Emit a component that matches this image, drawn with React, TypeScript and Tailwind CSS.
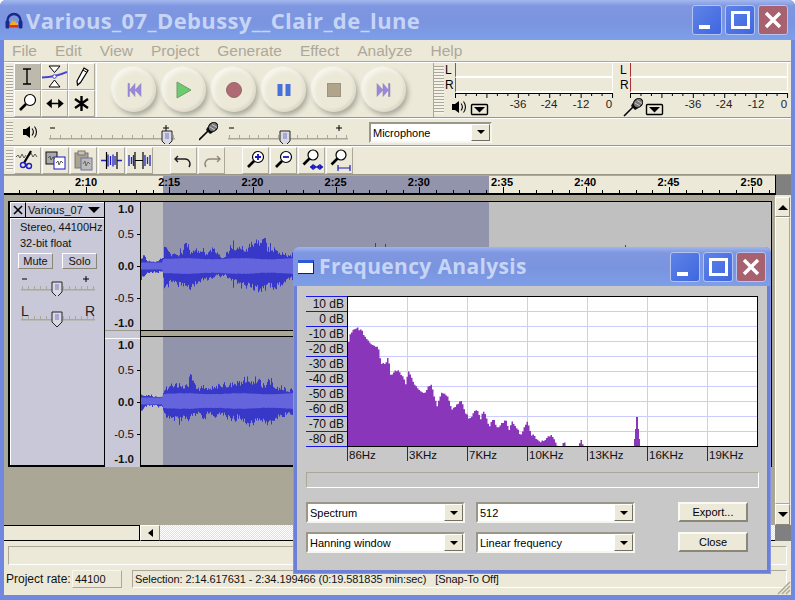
import React from "react";

function rng(seed: number) {
  let s = seed;
  return () => {
    s = (s * 1664525 + 1013904223) % 4294967296;
    return s / 4294967296;
  };
}
function interp(pts: number[][], x: number) {
  if (x <= pts[0][0]) return pts[0][1];
  for (let i = 1; i < pts.length; i++) {
    if (x <= pts[i][0]) {
      const [a, b] = pts[i - 1];
      const [c, d] = pts[i];
      return b + ((d - b) * (x - a)) / (c - a || 1);
    }
  }
  return pts[pts.length - 1][1];
}

const Z = (pts: number[][]) => pts.map(([z, a]) => [100 + z / 3, a]);
const c1t = Z([[123,10],[133,15],[140,8],[160,6],[187,8],[190,8],[193,28],[205,17],[240,17],[255,23],[270,23],[300,20],[320,13],[340,20],[370,11],[395,26],[420,20],[460,26],[495,28],[530,18],[570,13],[700,14],[2100,14]]);
const c1b = Z([[123,14],[140,7],[187,7],[193,30],[210,17],[270,27],[300,20],[340,16],[370,12],[400,21],[440,25],[495,30],[530,23],[570,14],[700,16],[2100,16]]);
const c2t = Z([[123,9],[140,7],[187,5],[193,17],[230,18],[270,27],[300,16],[330,16],[380,22],[420,22],[460,27],[500,24],[540,16],[575,14],[2100,14]]);
const c2b = Z([[123,13],[140,6],[187,6],[193,17],[270,25],[300,18],[350,20],[400,20],[440,26],[500,27],[540,16],[575,16],[2100,15]]);

function wave(t: number[][], b: number[][], seed: number) {
  const r = rng(seed);
  const mid = 64;
  let dark = "";
  let top = "";
  let bot = "";
  let slowA = 0.8;
  let slowB = 0.8;
  for (let i = 0; i < 630; i++) {
    const x = i + 141;
    if (i % 6 === 0) {
      slowA = 0.66 + r() * 0.34;
      slowB = 0.66 + r() * 0.34;
    }
    const a = interp(t, x) * Math.min(1, slowA * (0.78 + 0.34 * r()));
    const c = interp(b, x) * Math.min(1, slowB * (0.78 + 0.34 * r()));
    const spikeA = r() > 0.93 ? 1 / Math.max(slowA, 0.7) : 1;
    const spikeB = r() > 0.93 ? 1 / Math.max(slowB, 0.7) : 1;
    dark += `M${i + 0.5} ${(mid - Math.max(a * spikeA, x < 163 ? 4 : 8)).toFixed(1)}V${(mid + Math.max(c * spikeB, x < 163 ? 4 : 8)).toFixed(1)}`;
    const rm = x < 163 ? 3.6 : 7 + 0.5 * Math.sin(x / 9) + r() * 0.6;
    top += `${i === 0 ? "M" : "L"}${i} ${(mid - rm).toFixed(1)}`;
    bot = `L${i} ${(mid + rm).toFixed(1)}` + bot;
  }
  return { dark, rms: top + bot + "Z" };
}
const w1 = wave(c1t, c1b, 7);
const w2 = wave(c2t, c2b, 23);

function Channel({ w, extra }: { w: { dark: string; rms: string }; extra?: boolean }) {
  return (
    <svg width={630} height={129} className="block">
      <rect width={630} height={129} fill="#c0c0c0" />
      <rect x={22} width={326} height={129} fill="#9294ac" />
      <path d={w.dark} stroke="#3737c8" strokeWidth={1} fill="none" />
      <path d={w.rms} fill="#6464dc" />
      {extra && <path d="M234.5 41V64M244.5 42V64M484.5 43V64" stroke="#3737c8" />}
    </svg>
  );
}

const specZ: number[][] = [[172,320],[178,285],[195,262],[215,275],[225,295],[245,315],[262,322],[272,370],[285,375],[292,350],[300,405],[315,388],[330,400],[345,430],[355,392],[375,440],[400,462],[420,432],[440,500],[450,460],[470,468],[485,510],[510,482],[535,540],[558,505],[570,535],[580,512],[595,560],[608,532],[620,565],[645,540],[655,570],[665,542],[690,585],[710,545],[722,590],[730,585],[745,605],[760,600],[782,585],[800,618],[815,618],[820,600],[825,618],[865,618],[870,597],[878,618],[900,618]];
function spectrum() {
  const r = rng(11);
  let d = "M1 150";
  for (let x = 1; x < 240; x += 1.5) {
    const z = (x + 347 - 290) * 3;
    const y = 240 + interp(specZ, z) / 3 - 296;
    const j = y > 147 ? 0 : (r() - 0.5) * 2.5;
    d += `L${x.toFixed(1)} ${Math.min(150, y + j).toFixed(1)}L${(x + 1.5).toFixed(1)} ${Math.min(150, y + j).toFixed(1)}`;
  }
  d += "L241 150Z";
  return d;
}
const specPath = spectrum();

function TitleButtons({ gap = 3 }: { gap?: number }) {
  const base = "w-[30px] h-[30px] rounded-[3px] border border-[#b4c4f0] relative";
  return (
    <div className="flex" style={{ gap }}>
      <div className={base + " bg-gradient-to-br from-[#5f83e6] to-[#3f66e0]"}>
        <div className="absolute left-[6px] bottom-[5px] w-[11px] h-[4px] bg-white" />
      </div>
      <div className={base + " bg-gradient-to-br from-[#5f83e6] to-[#3f66e0]"}>
        <div className="absolute left-[5px] top-[5px] w-[19px] h-[18px] border-[3px] border-white" />
      </div>
      <div className={base + " bg-[#a8626f]"}>
        <svg width={28} height={28} className="block">
          <path d="M7 7L21 21M21 7L7 21" stroke="#fff" strokeWidth={3.4} />
        </svg>
      </div>
    </div>
  );
}

function Grip() {
  return <div className="w-[7px] ml-[2px] mr-[1px] self-stretch my-[3px] shrink-0 bg-[repeating-linear-gradient(180deg,#aca899_0_1px,#f5f3e8_1px_3px)]" />;
}

function Tool({ active, children }: { active?: boolean; children: React.ReactNode }) {
  return (
    <div className={"w-[27px] h-[27px] flex items-center justify-center border border-t-[#fff] border-l-[#fff] border-r-[#aca899] border-b-[#aca899] " + (active ? "bg-[#bdbaad] border-t-[#8d8a7d] border-l-[#8d8a7d]" : "bg-[#ece9d8]")}>
      {children}
    </div>
  );
}

const Ico = ({ children }: { children: React.ReactNode }) => (
  <svg width={25} height={25} viewBox="0 0 25 25" className="block">{children}</svg>
);
const Mag = ({ cx = 15, cy = 9, r = 5.5 }: { cx?: number; cy?: number; r?: number }) => (
  <g>
    <circle cx={cx} cy={cy} r={r} fill="#fff" stroke="#000" strokeWidth={1.2} />
    <path d={`M${cx - r + 1.5} ${cy + r - 1.5}L${cx - r - 4.5} ${cy + r + 4.5}`} stroke="#000" strokeWidth={2.6} />
  </g>
);

function Transport({ children }: { children: React.ReactNode }) {
  return (
    <div className="w-[44px] h-[44px] rounded-full bg-[#ece9d8] flex items-center justify-center shadow-[2px_3px_5px_rgba(60,60,50,0.38),-1px_-1px_2px_#fff,inset_2px_2px_4px_#f8f7ee,inset_-2px_-2px_3px_rgba(0,0,0,0.08)]">
      <svg width={24} height={24} viewBox="0 0 24 24" className="block">{children}</svg>
    </div>
  );
}

const DropBox = () => (
  <g>
    <rect x={0.5} y={0.5} width={16} height={10} rx={1} fill="#ece9d8" stroke="#000" strokeWidth={1.4} />
    <path d="M3 3h11l-5.5 5.5z" fill="#000" />
  </g>
);
const Speaker = () => (
  <g>
    <path d="M0 4h3l4-3v12l-4-3H0z" fill="#000" />
    <path d="M9 3.5c1.6 2 1.6 5 0 7M11.5 1.5c2.6 3.2 2.6 8 0 11" stroke="#000" fill="none" strokeWidth={1.1} />
  </g>
);
const Mic = () => (
  <g>
    <path d="M0 19L11 8" stroke="#000" strokeWidth={1.6} />
    <path d="M7 9l4 4 3-1.5-5.5-5.5z" fill="#111" />
    <ellipse cx={14} cy={6} rx={5} ry={4.2} transform="rotate(-45 14 6)" fill="#777" stroke="#000" />
    <path d="M11 6l5 3M13 3.5l5 3" stroke="#ddd" strokeWidth={0.8} />
  </g>
);

function Meter({ red, icon, dropX, w }: { red?: boolean; icon: React.ReactNode; dropX: number; w: number }) {
  const c = red ? "#a83030" : "#2f8a3a";
  const Row = ({ l }: { l: string }) => (
    <div className="flex h-[15px]">
      <div className="w-[11px] shrink-0 text-[12px] leading-[15px] pl-[1px] text-black">{l}</div>
      <div className="w-[158px] shrink-0 border-r-[1px] border-b-[2px] border-r-white border-b-white bg-[#ece9d8]" style={{ borderLeft: `1px solid ${c}` }} />
    </div>
  );
  const ticks: string[] = [];
  for (let i = 0; i <= 15; i++) ticks.push(`M${11.5 + i * 10.47} 1V${i % 3 === 0 ? 5 : 3}`);
  return (
    <div className="shrink-0 overflow-hidden" style={{ width: w }}>
      <Row l="L" />
      <Row l="R" />
      <svg width={175} height={26} className="block">
        <path d="M11 .5H169" stroke="#000" />
        <path d={ticks.join("")} stroke="#000" />
        <g fontSize={11.5} textAnchor="middle" fill="#222">
          <text x={74} y={15}>-36</text>
          <text x={105} y={15}>-24</text>
          <text x={137} y={15}>-12</text>
          <text x={165} y={15}>0</text>
        </g>
        <g>{icon}</g>
        <g transform={`translate(${dropX} 11)`}><DropBox /></g>
      </svg>
    </div>
  );
}

function Slider({ w, t, l, r, h = 24, y = 18 }: { w: number; t: number; l?: string; r?: string; h?: number; y?: number }) {
  const n = 12;
  const ticks: string[] = [];
  for (let i = 0; i <= n; i++) ticks.push(`M${1.5 + Math.round((i * (w - 3)) / n)} ${y - 3}V${y}`);
  return (
    <svg width={w} height={h} className="block">
      <path d={ticks.join("")} stroke="#aca899" />
      <rect x={0} y={y} width={w} height={1.5} fill="#aca899" />
      {!l && <path d={`M1 ${y - 10}h5M${w - 12} ${y - 10}h6M${w - 9} ${y - 13}v6`} stroke="#000" />}
      {l && <text x={0} y={y - 3} fontSize={14} fill="#222">{l}</text>}
      {r && <text x={w} y={y - 3} fontSize={14} textAnchor="end" fill="#222">{r}</text>}
      <path d={`M${t - 5} ${y - 7}h10v10l-5 5l-5 -5z`} fill="#d9d9e4" stroke="#222" />
      <path d={`M${t - 2} ${y - 4}h4M${t - 2} ${y - 2}h4M${t - 2} ${y}h4`} stroke="#7676c0" />
    </svg>
  );
}

function Combo({ w, text, className = "" }: { w: number; text: string; className?: string }) {
  return (
    <div className={"flex items-center h-[21px] bg-white border-2 border-t-[#9a9788] border-l-[#9a9788] border-r-[#f6f5ee] border-b-[#f6f5ee] " + className} style={{ width: w }}>
      <div className="flex-1 pl-[2px] pt-[2px] text-[11px] text-black whitespace-nowrap overflow-hidden leading-none">{text}</div>
      <div className="w-[19px] h-[17px] bg-[#ece9d8] border border-t-white border-l-white border-r-[#716f64] border-b-[#716f64] flex items-center justify-center">
        <div className="w-0 h-0 border-l-[4px] border-r-[4px] border-t-[4px] border-l-transparent border-r-transparent border-t-black" />
      </div>
    </div>
  );
}

function BevelBtn({ w, h, text, className = "" }: { w: number; h: number; text: string; className?: string }) {
  return (
    <div className={"flex items-center justify-center text-[11px] text-black bg-[#ece9d8] border-2 border-t-[#fbfaf4] border-l-[#fbfaf4] border-r-[#8a8778] border-b-[#8a8778] " + className} style={{ width: w, height: h }}>
      {text}
    </div>
  );
}

function TimeRuler() {
  const labels = ["2:10", "2:15", "2:20", "2:25", "2:30", "2:35", "2:40", "2:45", "2:50"];
  const minor: string[] = [];
  for (let i = -4; i < 42; i++) {
    const x = Math.round(82 + i * 16.66) + 0.5;
    if (x > 0 && x < 770) minor.push(`M${x} ${i % 5 === 0 ? 12 : 15}V18`);
  }
  return (
    <svg width={771} height={20} className="block shrink-0">
      <rect width={771} height={20} fill="#ece9d8" />
      <rect x={159} width={326} height={18} fill="#9294ac" />
      <path d="M0 .5H771" stroke="#aca899" />
      <path d={minor.join("")} stroke="#000" />
      <rect y={18} width={771} height={2} fill="#000" />
      <g fontSize={11} fontWeight={700} textAnchor="middle" fill="#000">
        {labels.map((l, i) => (
          <text key={l} x={82 + i * 83.3 - (i === 0 ? 0 : i * 0.1)} y={11}>{l}</text>
        ))}
      </g>
    </svg>
  );
}

function VRuler() {
  const rows = [
    [7, "1.0", 1], [32, "0.5", 0], [64, "0.0", 1], [96, "-0.5", 0], [121, "-1.0", 1],
  ] as [number, string, number][];
  const R = ({ off }: { off: number }) => (
    <g transform={`translate(0 ${off})`}>
      {rows.map(([y, t, b]) => (
        <text key={t} x={29} y={y + 4} fontSize={11.5} textAnchor="end" fontWeight={b ? 700 : 400} fill="#111">{t}</text>
      ))}
      <path d="M32 32.5h3M32 64.5h3M32 96.5h3" stroke="#000" />
    </g>
  );
  return (
    <svg width={35} height={265} className="block">
      <rect width={35} height={265} fill="#c8c8d8" />
      <R off={0} />
      <R off={136} />
      <rect y={128} width={35} height={1} fill="#9d9a8c" />
      <rect y={136} width={35} height={1} fill="#fff" />
    </svg>
  );
}

function Spectrum() {
  const db = ["10 dB", "0 dB", "-10 dB", "-20 dB", "-30 dB", "-40 dB", "-50 dB", "-60 dB", "-70 dB", "-80 dB"];
  const fr = ["86Hz", "3KHz", "7KHz", "10KHz", "13KHz", "16KHz", "19KHz"];
  return (
    <svg width={460} height={170} className="block">
      <g transform="translate(41 0)">
        <rect x={0} y={0} width={411} height={150} fill="#fff" />
        {Array.from({ length: 9 }, (_, i) => (
          <path key={i} d={`M0 ${15.5 + i * 15}H411`} stroke="#ccccff" />
        ))}
        {Array.from({ length: 6 }, (_, i) => (
          <path key={i} d={`M${60.5 + i * 60} 0V150`} stroke="#ccccff" />
        ))}
        <path d={specPath} fill="#8a36ba" />
        <path d="M287 150V143H288V133H289V121H291V133H292V143H293V150Z" fill="#8a36ba" />
        <rect x={0.5} y={0.5} width={410} height={150} fill="none" stroke="#000" />
      </g>
      {Array.from({ length: 11 }, (_, i) => (
        <path key={i} d={`M0 ${0.5 + i * 15}H41`} stroke="#1818e0" />
      ))}
      {db.map((t, i) => (
        <text key={t} x={38} y={12 + i * 15} fontSize={12} textAnchor="end" fill="#111">{t}</text>
      ))}
      {fr.map((t, i) => (
        <g key={t}>
          <path d={`M${41.5 + i * 60} 151V165`} stroke="#1818e0" />
          <text x={43 + i * 60} y={163} fontSize={11.5} fill="#111">{t}</text>
        </g>
      ))}
    </svg>
  );
}

export default function App() {
  return (
    <div className="relative w-[795px] h-[600px] overflow-hidden bg-[#7088e0] flex flex-col font-['Liberation_Sans',Arial,sans-serif] rounded-t-[6px]">
      {/* title */}
      <div className="h-[40px] flex items-center pl-[5px] pr-[7px] bg-[linear-gradient(180deg,#a4b8ee_0px,#7f97e0_6px,#7b94df_22px,#7d9ee8_38px,#7f9fe6_40px)]">
        <svg width={18} height={18} viewBox="0 0 18 18" className="block mr-[3px] mt-[1px]">
          <path d="M2.500 11V8.500a6.500 6.500 0 0 1 13 0V11" fill="none" stroke="#1a2a8a" strokeWidth={2.400} />
          <rect x={0.5} y={8.500} width={4} height={8} rx={1.5} fill="#1a2a8a" />
          <rect x={13.500} y={8.500} width={4} height={8} rx={1.5} fill="#1a2a8a" />
          <path d="M5 15V11l1 1 1-4 2 2 1-2 1 3 2-1v5z" fill="#f0b020" />
          <path d="M5 13h8v2.500H5z" fill="#e03010" />
        </svg>
        <div className="flex-1 text-[22px] font-bold text-[#c6d5f6] tracking-[0.4px] font-['Open_Sans',sans-serif] whitespace-nowrap leading-none">Various_07_Debussy__Clair_de_lune</div>
        <TitleButtons />
      </div>

      <div className="flex-1 mx-[4px] mb-[5px] bg-[#ece9d8] flex flex-col min-h-0 w-[787px]">
        {/* menu */}
        <div className="h-[22px] flex items-center gap-[18px] pl-[8px] text-[15.5px] text-[#aca899] border-b border-b-[#aca899] shrink-0">
          {["File", "Edit", "View", "Project", "Generate", "Effect", "Analyze", "Help"].map((m) => (
            <span key={m}>{m}</span>
          ))}
        </div>
        {/* toolbar 1 */}
        <div className="h-[56px] flex shrink-0 overflow-hidden border-t border-t-white border-b border-b-[#9a9788]">
          <Grip />
          <div className="grid grid-cols-[27px_27px_27px] grid-rows-[27px_27px] w-[81px] mr-[1px] shrink-0">
            <Tool active><Ico><path d="M8 5h8M12 5v15M8 20h8" stroke="#000" strokeWidth={1.4} fill="none" /></Ico></Tool>
            <Tool>
              <Ico>
                <path d="M7 2h11l-5.500 6.500zM7 23h11l-5.500-7z" fill="#fff" stroke="#000" />
                <path d="M-1 13.500C7 13.500 15 12.500 25 8" stroke="#4545d0" strokeWidth={2} fill="none" />
                <circle cx={12.500} cy={12.500} r={1.800} fill="#fff" stroke="#4545d0" />
              </Ico>
            </Tool>
            <Tool>
              <Ico>
                <path d="M15 4l4 2.500-7.500 12-3 2.500-.5-4z" fill="#fff" stroke="#000" strokeWidth={1.2} />
                <path d="M14 6l4 2.500" stroke="#000" />
              </Ico>
            </Tool>
            <Tool><Ico><Mag /></Ico></Tool>
            <Tool>
              <Ico><path d="M6 12.500h14M9 9.500l-3.500 3 3.500 3zM17 9.500l3.500 3-3.500 3z" stroke="#000" strokeWidth={1.6} fill="#000" /></Ico>
            </Tool>
            <Tool><Ico><path d="M12.500 5v15M6 8l13 9M19 8L6 17" stroke="#000" strokeWidth={2.4} /></Ico></Tool>
          </div>
          <div className="w-[338px] border-l border-r border-l-white border-r-[#aca899] flex items-center gap-[6px] pl-[15px] shrink-0">
            <Transport><path d="M6 5.500h1.500v13H6zM13 5.500v13l-5.500-6.500zM19 5.500v13l-6-6.500z" fill="#9a88dc" stroke="#8a80b8" strokeWidth={0.5} /></Transport>
            <Transport><path d="M5 4l14 8-14 8z" fill="#6ccb6c" stroke="#6f9c6f" /></Transport>
            <Transport><circle cx={12} cy={12} r={7.500} fill="#b06a74" stroke="#8f6a70" /></Transport>
            <Transport><path d="M5.500 6h5v12h-5zM13.500 6h5v12h-5z" fill="#4a70dc" /></Transport>
            <Transport><rect x={5.500} y={5.500} width={13} height={13} fill="#b0a48a" stroke="#9c9482" /></Transport>
            <Transport><path d="M5 5.500v13l6-6.500zM11 5.500v13l5.500-6.500zM16.500 5.500h1.500v13h-1.500z" fill="#9a88dc" stroke="#8a80b8" strokeWidth={0.5} /></Transport>
          </div>
          <div className="w-[10px] shrink-0 self-stretch bg-[repeating-linear-gradient(180deg,#aca899_0_1px,#f5f3e8_1px_3px)] my-[3px]" />
          <Meter w={175} icon={<g transform="translate(8 7)"><Speaker /></g>} dropX={27} />
          <Meter w={172} red icon={<g transform="translate(5 4)"><Mic /></g>} dropX={27} />
        </div>
        {/* toolbar 2 */}
        <div className="h-[28px] flex items-center shrink-0 border-t border-t-white border-b border-b-[#9a9788]">
          <Grip />
          <svg width={14} height={14} className="block ml-[9px] mr-[12px]"><Speaker /></svg>
          <Slider w={126} t={118} />
          <svg width={20} height={20} className="block ml-[24px] mr-[9px] mb-[2px]"><Mic /></svg>
          <Slider w={120} t={57} />
          <Combo w={123} text="Microphone" className="ml-[21px]" />
        </div>
        {/* toolbar 3 */}
        <div className="h-[29px] flex items-center shrink-0 border-t border-t-white border-b border-b-[#9a9788]">
          <Grip />
          <div className="flex gap-[1px] text-black">
            <Tool>
              <Ico>
                <path d="M1 9l2-2 2 3 2-4 2 4 2-3M14 8l2-3 2 4 2-3 2 3" stroke="#555" fill="none" />
                <path d="M16 3l-7 12" stroke="#000" strokeWidth={2.2} />
                <circle cx={8} cy={17} r={2.500} fill="none" stroke="#2020c0" strokeWidth={1.4} />
                <circle cx={14} cy={18} r={2.500} fill="none" stroke="#2020c0" strokeWidth={1.4} />
                <path d="M9 15l4 2" stroke="#2020c0" />
              </Ico>
            </Tool>
            <Tool>
              <Ico>
                <rect x={3} y={4} width={11} height={12} fill="#aaa" stroke="#111" />
                <rect x={11} y={9} width={11} height={12} fill="#fff" stroke="#1818c0" />
                <path d="M5 10l2-2 1 4 2-3 2 2M13 15l2-2 1 4 2-4 2 2" stroke="#555" fill="none" />
              </Ico>
            </Tool>
            <Tool>
              <Ico>
                <rect x={4} y={5} width={13} height={15} fill="#a8a48f" stroke="#777" />
                <rect x={7} y={3} width={7} height={4} fill="#c8c4b0" stroke="#777" />
                <rect x={10} y={10} width={11} height={12} fill="#bbb" stroke="#7070a0" />
                <path d="M12 16l2-3 1 5 2-4 2 2" stroke="#666" fill="none" />
              </Ico>
            </Tool>
            <Tool>
              <Ico>
                <path d="M2 12.500h5M18 12.500h5" stroke="#2020c0" strokeWidth={1.4} />
                <path d="M9 6.500v12M11.500 8v9M14 6.500v12M16 8v9" stroke="#2020c0" strokeWidth={1.3} />
                <path d="M7.500 4v17M18 4v17" stroke="#000" strokeWidth={1.2} />
              </Ico>
            </Tool>
            <Tool>
              <Ico>
                <path d="M8 12.500h8" stroke="#000" strokeWidth={1} />
                <path d="M2 7v11M4.500 9v7M6.500 7v11M18 7v11M20.500 9v7M23 7v11" stroke="#2020c0" strokeWidth={1.3} />
                <path d="M8 4v17M16 4v17" stroke="#000" strokeWidth={1.2} />
              </Ico>
            </Tool>
            <div className="w-[15px]" />
            <Tool><Ico><path d="M7 8l-3 3 3 3M4.500 11H14a5 5 0 0 1 4 8" stroke="#222" strokeWidth={1.400} fill="none" /></Ico></Tool>
            <Tool><Ico><path d="M18 8l3 3-3 3M20.500 11H11a5 5 0 0 0-4 8" stroke="#8d8a7d" strokeWidth={1.400} fill="none" /></Ico></Tool>
            <div className="w-[15px]" />
            <Tool><Ico><Mag /><path d="M12 9h6M15 6v6" stroke="#1818c0" strokeWidth={1.800} /></Ico></Tool>
            <Tool><Ico><Mag /><path d="M12 9h6" stroke="#1818c0" strokeWidth={1.800} /></Ico></Tool>
            <Tool><Ico><Mag cx={14} cy={7} r={5} /><path d="M11 19h13M11 19l3-2.500v5zM24 19l-3-2.500v5zM17.500 19l-3-2.500v5zM17.500 19l3-2.500v5z" stroke="#1818c0" fill="#1818c0" strokeWidth={0.6} /></Ico></Tool>
            <Tool><Ico><Mag cx={14} cy={7} r={5} /><path d="M11 20h12M11 17v6M23 17v6" stroke="#1818c0" strokeWidth={1.200} /></Ico></Tool>
          </div>
        </div>
        {/* ruler */}
        <div className="h-[20px] flex shrink-0">
          <TimeRuler />
          <div className="flex-1 bg-[#808080] border-l border-l-black" />
        </div>
        {/* track area */}
        <div className="h-[330px] flex shrink-0 bg-[#aba796]">
          <div className="flex-1 pl-[4px] pt-[6px]">
            <div className="w-[764px] h-[266px] flex border-2 border-t-[1px] border-r-[1px] border-black border-t-black bg-[#c8c8d8]">
              <div className="w-[95px] shrink-0 flex flex-col border-r border-r-black">
                <div className="h-[16px] flex border-b border-b-black bg-[#c8c8d8]">
                  <div className="w-[16px] flex items-center justify-center border-t border-l border-r border-t-white border-l-white border-r-black">
                    <svg width={10} height={10}><path d="M1 1l8 8M9 1l-8 8" stroke="#000" strokeWidth={1.600} /></svg>
                  </div>
                  <div className="flex-1 flex items-center pl-[2px] text-[11px] text-[#111] border-t border-t-white leading-none">
                    Various_07
                    <div className="ml-[5px] w-0 h-0 border-l-[6px] border-r-[6px] border-t-[6px] border-l-transparent border-r-transparent border-t-black" />
                  </div>
                </div>
                <div className="flex-1 border-t border-l border-t-white border-l-white flex flex-col text-[11px] text-[#111]">
                  <div className="pl-[9px] leading-[16px] whitespace-nowrap">Stereo, 44100Hz</div>
                  <div className="pl-[9px] leading-[16px]">32-bit float</div>
                  <div className="flex gap-[9px] pl-[7px] mt-[2px]">
                    <div className="w-[35px] h-[16px] flex items-center justify-center border border-t-white border-l-white border-r-[#8a8778] border-b-[#8a8778]">Mute</div>
                    <div className="w-[35px] h-[16px] flex items-center justify-center border border-t-white border-l-white border-r-[#8a8778] border-b-[#8a8778]">Solo</div>
                  </div>
                  <div className="pl-[10px] mt-[3px]"><Slider w={74} t={36} h={24} y={17} /></div>
                  <div className="pl-[10px] mt-[2px]"><Slider w={74} t={36} l="L" r="R" h={30} y={21} /></div>
                </div>
              </div>
              <div className="w-[36px] shrink-0 border-r border-r-black"><VRuler /></div>
              <div className="w-[630px] shrink-0 flex flex-col">
                <Channel w={w1} extra />
                <div className="h-[7px] bg-[#aba796] border-t border-b border-black shrink-0" />
                <div className="h-[129px] overflow-hidden"><Channel w={w2} /></div>
              </div>
            </div>
          </div>
          <div className="w-[16px] pt-[2px] flex flex-col bg-[#ece9d8] pr-[1px]">
            <div className="h-[20px] flex items-center justify-center border border-t-white border-l-white border-r-[#8a8778] border-b-[#8a8778]">
              <div className="w-0 h-0 border-l-[5px] border-r-[5px] border-b-[5px] border-l-transparent border-r-transparent border-b-black" />
            </div>
            <div className="flex-1 border border-t-white border-l-white border-r-[#aca899] border-b-[#aca899]" />
            <div className="h-[21px] flex items-center justify-center border border-t-white border-l-white border-r-[#8a8778] border-b-[#8a8778]">
              <div className="w-0 h-0 border-l-[5px] border-r-[5px] border-t-[5px] border-l-transparent border-r-transparent border-t-black" />
            </div>
          </div>
        </div>
        {/* h scroll */}
        <div className="h-[16px] flex shrink-0">
          <div className="w-[136px] border-t border-r border-b border-black bg-[#ece9d8]" />
          <div className="w-[20px] flex items-center justify-center border border-t-white border-l-white border-r-[#8a8778] border-b-black">
            <div className="w-0 h-0 border-t-[4px] border-b-[4px] border-r-[5px] border-t-transparent border-b-transparent border-r-black" />
          </div>
          <div className="w-[615px] border-b border-b-black bg-[#f4f2e6] bg-[repeating-conic-gradient(#ffffff_0_25%,#e4e1d0_0_50%)] bg-[length:2px_2px]" />
          <div className="flex-1 bg-[#808080]" />
        </div>
        {/* status */}
        <div className="flex-1 relative flex flex-col px-[2px]">
          <div className="h-[19px] mt-[5px] ml-[2px] mr-[2px] border border-t-[#aca899] border-l-[#aca899] border-r-white border-b-white" />
          <div className="flex items-center mt-[5px] text-[12px] text-[#111] h-[18px]">
            <span className="w-[66px]">Project rate:</span>
            <div className="w-[50px] h-[18px] flex items-center pl-[2px] text-[11px] border border-t-[#f8f7ee] border-l-[#f8f7ee] border-r-[#aca899] border-b-[#aca899]">44100</div>
            <div className="ml-[10px] w-[655px] h-[18px] flex items-center pl-[2px] text-[11px] tracking-[-0.08px] border border-t-[#aca899] border-l-[#aca899] border-r-white border-b-white whitespace-pre">Selection: 2:14.617631 - 2:34.199466 (0:19.581835 min:sec)   [Snap-To Off]</div>
          </div>
          <svg width={16} height={16} className="absolute right-0 bottom-0">
            <path d="M15 3L3 15M15 7L7 15M15 11L11 15" stroke="#aca899" strokeWidth={1.500} />
          </svg>
        </div>
      </div>

      {/* dialog */}
      <div className="absolute left-[293px] top-[247px] w-[478px] h-[327px] flex flex-col bg-[#6c80d8] rounded-t-[6px] shadow-[inset_0_0_0_1px_#8296e2]">
        <div className="h-[39px] flex items-center pl-[5px] pr-[5px] rounded-t-[6px] bg-[linear-gradient(180deg,#a0b4ee_0px,#7f97e0_6px,#7b94df_22px,#7d9ee8_39px)] shrink-0">
          <div className="w-[16px] h-[14px] bg-white border-t-[3px] border-t-[#2a5ad8] border-r border-b border-r-[#222] border-b-[#222] mr-[5px]" />
          <div className="flex-1 text-[21px] font-bold text-[#c6d5f6] tracking-[0.35px] font-['Open_Sans',sans-serif] whitespace-nowrap leading-none">Frequency Analysis</div>
          <TitleButtons />
        </div>
        <div className="flex-1 mx-[4px] mb-[4px] bg-[#c8c8c8] px-[9px] pt-[10px] flex flex-col">
          <Spectrum />
          <div className="ml-[0px] mt-[6px] w-[453px] h-[16px] border border-t-[#aca899] border-l-[#aca899] border-r-white border-b-white" />
          <div className="flex mt-[14px]">
            <div className="grid grid-cols-[159px_159px] gap-x-[11px] gap-y-[9px]">
              <Combo w={159} text="Spectrum" />
              <Combo w={159} text="512" />
              <Combo w={159} text="Hanning window" />
              <Combo w={159} text="Linear frequency" />
            </div>
            <div className="flex flex-col gap-[10px] ml-[43px]">
              <BevelBtn w={70} h={20} text="Export..." />
              <BevelBtn w={70} h={20} text="Close" />
            </div>
          </div>
        </div>
      </div>
    </div>
  );
}
